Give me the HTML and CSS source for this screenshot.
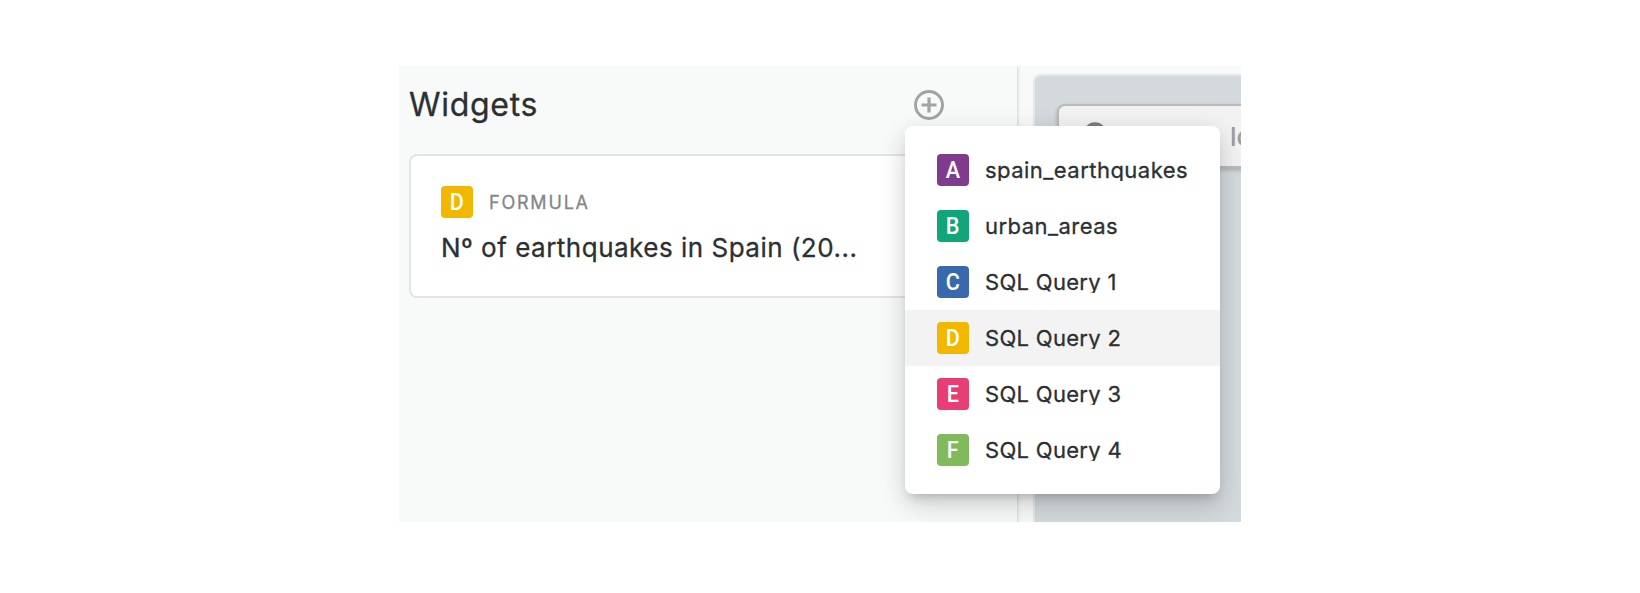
FILE: index.html
```html
<!DOCTYPE html>
<html lang="en">
<head>
<meta charset="utf-8">
<title>Widgets</title>
<link rel="stylesheet" href="styles.css">
</head>
<body>
<main class="app">
  <section class="panel">
    <header class="panel-header">
      <h1 class="panel-title">Widgets</h1>
      <button class="add" aria-label="Add widget">
        <svg width="30" height="30" viewBox="0 0 30 30" fill="none" stroke="#a2a4a4">
          <circle cx="15" cy="15" r="13.5" stroke-width="3"/>
          <path d="M15 7.5v15M7.5 15h15" stroke-width="3.2"/>
        </svg>
      </button>
    </header>
    <article class="card">
      <div class="card-source"><span class="badge badge-d"><b>D</b></span><span class="card-type">FORMULA</span></div>
      <h2 class="card-title">Nº of earthquakes in Spain (20...</h2>
    </article>
  </section>
  <section class="map">
    <div class="search">
      <svg class="search-icon" width="28" height="28" viewBox="0 0 28 28" fill="none" stroke="#7d7d7d" stroke-width="4"><circle cx="12" cy="12" r="9.7"/><path d="M19 19l8 8"/></svg>
      <span class="search-text">lo</span>
    </div>
  </section>
  <ul class="menu">
    <li class="item"><span class="badge badge-a"><b>A</b></span><span class="label">spain_earthquakes</span></li>
    <li class="item"><span class="badge badge-b"><b>B</b></span><span class="label">urban_areas</span></li>
    <li class="item"><span class="badge badge-c"><b>C</b></span><span class="label label-query">SQL Query 1</span></li>
    <li class="item item-active"><span class="badge badge-d"><b>D</b></span><span class="label label-query">SQL Query 2</span></li>
    <li class="item"><span class="badge badge-e"><b>E</b></span><span class="label label-query">SQL Query 3</span></li>
    <li class="item"><span class="badge badge-f"><b>F</b></span><span class="label label-query">SQL Query 4</span></li>
  </ul>
</main>
</body>
</html>
```
FILE: styles.css
```css
* { box-sizing: border-box; }
body {
  margin: 0;
  padding: 66px 0 0 399px;
  background: #fff;
  color: #2c3032;
  font-family: Inter, "Liberation Sans", sans-serif;
  -webkit-text-stroke: .3px;
}
.app {
  position: relative;
  display: flex;
  gap: 15px;
  width: 842px;
  height: 456px;
  overflow: hidden;
  background: #f8faf9;
}
.panel {
  flex: none;
  width: 619px;
  padding: 19px 0 0 10px;
  border-right: 1px solid #dfe2e2;
  box-shadow: 1px 0 3px rgba(0, 0, 0, .08);
}
.panel-header {
  display: flex;
  justify-content: space-between;
  align-items: center;
  height: 40px;
  padding-right: 73px;
}
.panel-title {
  margin: 0;
  font-size: 32px;
  line-height: 40px;
  font-weight: 400;
  letter-spacing: .7px;
}
.add { padding: 0; border: 0; background: none; height: 30px; }
.add svg { display: block; }
.card {
  width: 535px;
  height: 144px;
  margin-top: 29px;
  padding: 30px;
  border: 2px solid #e2e5e4;
  border-radius: 8px;
  background: #fff;
}
.card-source { display: flex; align-items: center; gap: 16px; }
.card-type { color: #848688; font-size: 18px; font-weight: 400; letter-spacing: 1.8px; }
.card-title {
  margin: 14px 0 0;
  font-size: 26px;
  line-height: 32px;
  font-weight: 400;
  letter-spacing: .5px;
  white-space: nowrap;
}
.badge {
  flex: none;
  display: flex;
  align-items: center;
  justify-content: center;
  width: 32px;
  height: 32px;
  padding-right: 1px;
  border-radius: 4px;
  color: #fff;
  font: 500 24px/32px Roboto, sans-serif;
  -webkit-text-stroke: 0;
}
.badge b { font-weight: 500; transform: scaleX(.9); }
.badge-a { background: #7f3c8d; }
.badge-b { background: #11a579; }
.badge-c { background: #3969ac; }
.badge-d { background: #f2b701; }
.badge-e { background: #e73f74; }
.badge-f { background: #80ba5a; }
.map {
  flex: none;
  width: 240px;
  height: 500px;
  margin-top: 8px;
  padding: 28px 0 0 22px;
  border: 2px solid #e4e8ea;
  border-radius: 8px;
  background: #d3d9dc;
}
.search {
  display: flex;
  align-items: center;
  width: 240px;
  height: 64px;
  padding-left: 24px;
  border: 2px solid #b9bbbb;
  border-radius: 8px;
  background: #f2f2f2;
  box-shadow: 0 2px 4px rgba(0, 0, 0, .2);
}
.search-icon { flex: none; margin-right: 119px; }
.search-text { color: #9d9d9d; font-size: 26px; font-weight: 500; -webkit-text-stroke: 0; }
.menu {
  position: absolute;
  left: 506px;
  top: 60px;
  width: 315px;
  height: 368px;
  margin: 0;
  padding: 16px 0;
  list-style: none;
  border-radius: 8px;
  background: #fff;
  box-shadow: 0 8px 10px -5px rgba(0, 0, 0, .16), 0 14px 28px rgba(0, 0, 0, .12), 0 2px 24px rgba(0, 0, 0, .08);
}
.item { display: flex; align-items: center; gap: 16px; height: 56px; padding-left: 32px; }
.item-active { background: #f3f3f3; }
.label {
  overflow: hidden;
  height: 22px;
  font-size: 22px;
  line-height: 22px;
  font-weight: 400;
  letter-spacing: .47px;
  white-space: nowrap;
}
.label-query { letter-spacing: .3px; }
```
